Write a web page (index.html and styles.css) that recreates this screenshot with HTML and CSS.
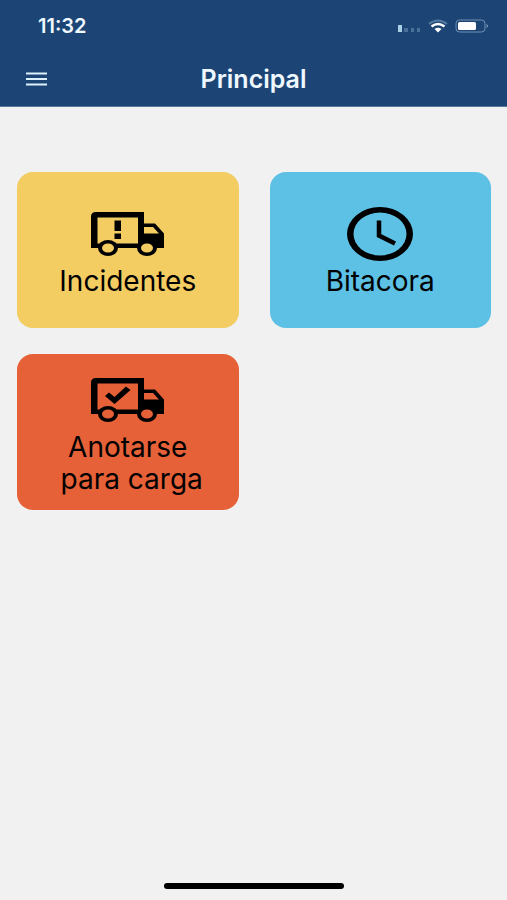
FILE: index.html
```html
<!DOCTYPE html>
<html lang="es">
<head>
  <meta charset="UTF-8">
  <meta name="viewport" content="width=device-width, initial-scale=1.0">
  <title>Principal</title>
  <link rel="stylesheet" href="styles.css">
</head>
<body>
  <header class="header">
    <div class="status-bar">
      <time class="clock">11:32</time>
      <div class="status-icons">
        <svg class="signal" width="24" height="14" viewBox="0 0 24 14" fill="#4a7099">
          <rect x="1" y="6" width="4" height="7" fill="#a9d0e6"/>
          <rect x="7" y="9" width="4" height="4"/>
          <rect x="14" y="9" width="3" height="4"/>
          <rect x="20" y="9" width="3" height="4"/>
        </svg>
        <svg class="wifi" width="20" height="14" viewBox="0 0 20 14" fill="none">
          <path d="M1 5Q10-2 19 5" stroke="#54799f" stroke-width="2"/>
          <path d="M3.500 7.500Q10 2.500 16.500 7.500" stroke="#fff" stroke-width="2.500"/>
          <path d="M6.500 10Q10 7.500 13.500 10L10 13.500Z" fill="#fff"/>
        </svg>
        <svg class="battery" width="34" height="14" viewBox="0 0 34 14">
          <rect x="1" y="1" width="29" height="12" rx="3.500" fill="none" stroke="#7191b3"/>
          <rect x="3" y="3" width="18" height="8" rx="1.500" fill="#fff"/>
          <path d="M31.500 5Q35 7 31.500 9Z" fill="#7191b3"/>
        </svg>
      </div>
    </div>
    <div class="toolbar">
      <button class="menu-button" type="button" aria-label="Menú">
        <svg width="22" height="14" viewBox="0 0 22 14" stroke="#dcf1fc" stroke-width="2">
          <path d="M0 1.500H21M0 7H21M0 12.500H21"/>
        </svg>
      </button>
      <h1 class="title">Principal</h1>
    </div>
  </header>

  <main class="menu">
    <button class="card incidentes" type="button">
      <svg width="73" height="54" viewBox="0 0 73 54">
        <path fill-rule="evenodd" d="M5 5H53V16.500H64L73 26.500V41H0V9.500Q0 5 5 5ZM6.500 10.500V36.500H47V10.500ZM53 20V26.500H68L62 20Z"/>
        <ellipse cx="17" cy="41" rx="10" ry="8"/>
        <ellipse cx="56" cy="41" rx="10" ry="8"/>
        <ellipse class="hub" cx="17" cy="41" rx="6" ry="4.500"/>
        <ellipse class="hub" cx="56" cy="41" rx="6" ry="4.500"/>
        <path d="M23.500 13.500H30V24H23.500ZM23.500 26.500H30V32H23.500Z"/>
      </svg>
      <span>Incidentes</span>
    </button>
    <button class="card bitacora" type="button">
      <svg width="66" height="54" viewBox="0 0 66 54" fill="none" stroke="#000">
        <path fill="#000" stroke="none" fill-rule="evenodd" d="M0 27A33 27 0 0 1 66 27A33 27 0 0 1 0 27ZM6.500 27A26.500 21.500 0 0 0 59.500 27A26.500 21.500 0 0 0 6.500 27Z"/>
        <path d="M32 13.500V28.500L48 36.500" stroke-width="4.500"/>
      </svg>
      <span>Bitacora</span>
    </button>
    <button class="card carga" type="button">
      <svg width="73" height="54" viewBox="0 0 73 54">
        <path fill-rule="evenodd" d="M5 5H53V16.500H64L73 26.500V41H0V9.500Q0 5 5 5ZM6.500 10.500V36.500H47V10.500ZM53 20V26.500H68L62 20Z"/>
        <ellipse cx="17" cy="41" rx="10" ry="8"/>
        <ellipse cx="56" cy="41" rx="10" ry="8"/>
        <ellipse class="hub" cx="17" cy="41" rx="6" ry="4.500"/>
        <ellipse class="hub" cx="56" cy="41" rx="6" ry="4.500"/>
        <path d="M14 23L18 19.500L23.500 24L35 13.500L39.500 17L23.500 31Z"/>
      </svg>
      <span>Anotarse<br>&nbsp;para carga</span>
    </button>
  </main>

  <footer class="footer">
    <div class="home-indicator"></div>
  </footer>
</body>
</html>
```

FILE: styles.css
```css
* {
  box-sizing: border-box;
}
body {
  display: flex;
  flex-direction: column;
  min-height: 100vh;
  margin: 0;
  font-family: Inter, "Liberation Sans", sans-serif;
  background: #f1f1f1;
  color: #000;
}
.header {
  background: #1c4575;
  border-bottom: 1px solid #54779f;
  color: #eff8ff;
}
.status-bar {
  display: flex;
  justify-content: space-between;
  align-items: center;
  height: 52px;
  padding: 0 18px 0 38px;
}
.clock {
  font-size: 20px;
  font-weight: 600;
}
.status-icons {
  display: flex;
  align-items: center;
  gap: 7px;
}
.toolbar {
  display: grid;
  grid-template-columns: 1fr auto 1fr;
  align-items: center;
  height: 54px;
  padding: 0 16px;
}
.menu-button {
  display: flex;
  justify-self: start;
  padding: 10px;
  border: none;
  background: none;
  cursor: pointer;
}
.title {
  margin: 0;
  font-size: 25px;
  font-weight: 600;
  line-height: 28px;
}
.menu {
  display: grid;
  grid-template-columns: 1fr 1fr;
  gap: 26px 31px;
  padding: 65px 16px 65px 17px;
}
.card {
  display: flex;
  flex-direction: column;
  align-items: center;
  justify-content: center;
  gap: 4px;
  min-height: 156px;
  padding: 8px 8px 4px;
  border: none;
  border-radius: 16px;
  font-family: inherit;
  font-size: 28px;
  line-height: 32px;
  color: #000;
  cursor: pointer;
}
.incidentes {
  background: #f3cc62;
}
.incidentes .hub {
  fill: #f3cc62;
}
.bitacora {
  background: #5dc0e5;
}
.carga {
  background: #e66038;
}
.carga .hub {
  fill: #e66038;
}
.footer {
  display: flex;
  justify-content: center;
  margin-top: auto;
  padding-bottom: 11px;
}
.home-indicator {
  width: 180px;
  height: 6px;
  border-radius: 3px;
  background: #000;
}
```
